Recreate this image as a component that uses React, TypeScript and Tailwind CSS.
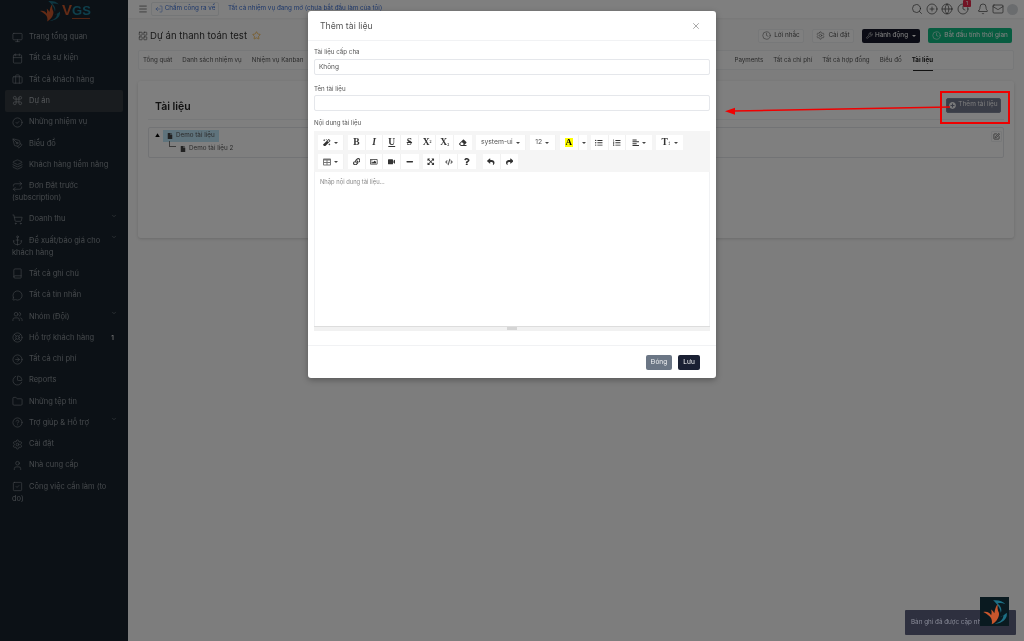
import React from "react";
import {
  Monitor, Calendar, Briefcase, Command, CircleCheck, PenTool, Layers, Repeat, ShoppingCart, Anchor, Book,
  MessageCircle, Users, LifeBuoy, CircleArrowRight, PieChart, Folder, CircleHelp, Settings, User, SquareCheck,
  ChevronDown, Menu, LogOut, LayoutGrid, Star, Search, CirclePlus, Globe, Clock, Bell, Mail, Wrench, X,
  SquarePen,
} from "lucide-react";
import {
  FaMagic, FaEraser, FaListUl, FaListOl, FaAlignLeft, FaTable, FaLink, FaRegImage, FaVideo, FaMinus,
  FaExpandArrowsAlt, FaCode, FaQuestion, FaReply, FaShare, FaFile, FaPlusCircle,
} from "react-icons/fa";

function Caret() {
  return <span className="ml-[3px] border-x-[2px] border-t-[2.5px] border-x-transparent border-t-[#444]" />;
}

function Logo({ size }: { size: number }) {
  return (
    <svg width={size} height={size} viewBox="0 0 40 40" fill="none">
      <path d="M2 20c6-1 10 1 12 5 1-3 1-6 0-9 3 2 4 4 5 6 1-6 2-11 6-15-2 6-1 10 1 14 1 5-2 13-11 18 1-5 0-9-3-12-3-3-6-5-10-7z" fill="#c8562c" />
      <path d="M17 2c8-1 15 1 19 6-5-2-9-2-12-1 5 4 7 9 5 14-1-7-6-14-12-19z" fill="#1d6f85" />
      <path d="M38 21c2 9-7 17-19 17 8-2 14-6 14-13-1 1-3 2-5 2 4-1 7-3 10-6z" fill="#1d6f85" />
    </svg>
  );
}

const nav: [any, string, string?, boolean?, string?][] = [
  [Monitor, "Trang tổng quan"],
  [Calendar, "Tất cả sự kiện"],
  [Briefcase, "Tất cả khách hàng"],
  [Command, "Dự án"],
  [CircleCheck, "Những nhiệm vụ"],
  [PenTool, "Biểu đồ"],
  [Layers, "Khách hàng tiềm năng"],
  [Repeat, "Đơn Đặt trước", "(subscription)"],
  [ShoppingCart, "Doanh thu", undefined, true],
  [Anchor, "Đề xuất/báo giá cho", "khách hàng", true],
  [Book, "Tất cả ghi chú"],
  [MessageCircle, "Tất cả tin nhắn"],
  [Users, "Nhóm (Đội)", undefined, true],
  [LifeBuoy, "Hỗ trợ khách hàng", undefined, false, "1"],
  [CircleArrowRight, "Tất cả chi phí"],
  [PieChart, "Reports"],
  [Folder, "Những tệp tin"],
  [CircleHelp, "Trợ giúp & Hỗ trợ", undefined, true],
  [Settings, "Cài đặt"],
  [User, "Nhà cung cấp"],
  [SquareCheck, "Công việc cần làm (to", "do)"],
];

function Sidebar() {
  return (
    <aside className="w-[128px] shrink-0 bg-[#19232c] text-[#8b9299] text-[7.5px] leading-[12px]">
      <div className="h-[26.5px] flex items-start pl-[39px] overflow-hidden">
        <Logo size={22} />
        <div className="ml-[1px] mt-[3px] flex flex-col">
          <span className="text-[15px] leading-[14px] font-bold text-[#c8562c] font-['Liberation_Sans',sans-serif]">V<span className="text-[#1d7f99] text-[13px]">GS</span></span>
          <span className="h-[1px] w-[18px] ml-[10px] bg-[#a54a28]" />
        </div>
      </div>
      <nav className="px-[5px] flex flex-col">
        {nav.map(([Icon, label, second, caret, badge]) => (
          <div key={label} className={`relative px-[7px] py-[4.65px] rounded-[2px] ${label === "Dự án" ? "bg-[#33393f] text-[#a8adb2]" : ""}`}>
            <div className="flex items-center h-[12px]">
              <Icon size={11} strokeWidth={1.3} className="w-[11px] mr-[6px] shrink-0" />
              <span className="whitespace-nowrap">{label}</span>
            </div>
            {second && <div>{second}</div>}
            {caret && <ChevronDown size={6} strokeWidth={2} className="absolute right-[6px] top-[4px]" />}
            {badge && <span className="absolute right-[9px] top-[5px] text-[6.5px] text-white">{badge}</span>}
          </div>
        ))}
      </nav>
    </aside>
  );
}

function TopBar() {
  return (
    <header className="h-[18px] bg-white flex items-center pl-[10px] pr-[6px] text-[6.3px] shrink-0 shadow-[0_1px_2px_rgba(0,0,0,0.05)]">
      <Menu size={10} strokeWidth={1.5} className="text-[#333] mr-[3px]" />
      <button className="h-[14px] w-[68px] flex items-center justify-center gap-[2px] border border-[#e9ecef] rounded-[2px] text-[#3b6fd4] mr-[9px]">
        <LogOut size={8} strokeWidth={1.5} className="rotate-180" />Chấm công ra về
      </button>
      <span className="text-[#3b6fd4] whitespace-nowrap">Tất cả nhiệm vụ đang mở (chưa bắt đầu làm của tôi)</span>
      <div className="ml-auto flex items-center text-[#333]">
        <Search size={12} strokeWidth={1.3} />
        <CirclePlus size={12} strokeWidth={1.3} className="ml-[3px]" />
        <Globe size={12} strokeWidth={1.3} className="ml-[3px]" />
        <div className="relative ml-[4px]">
          <Clock size={12} strokeWidth={1.3} />
          <span className="absolute -top-[3px] left-[6px] w-[8px] h-[7px] rounded-[1px] bg-[#e5294a] text-white text-[5px] leading-[7px] text-center">1</span>
        </div>
        <Bell size={12} strokeWidth={1.3} className="ml-[8px]" />
        <Mail size={12} strokeWidth={1.3} className="ml-[3px]" />
        <span className="ml-[3px] w-[11px] h-[11px] rounded-full bg-[#d5d8dc]" />
      </div>
    </header>
  );
}

const leftTabs = ["Tổng quát", "Danh sách nhiệm vụ", "Nhiệm vụ Kanban"];
const rightTabs = ["Payments", "Tất cả chi phí", "Tất cả hợp đồng", "Biểu đồ"];

function Page() {
  return (
    <main className="flex-1 min-w-0 bg-[#fafafa] flex flex-col">
      <TopBar />
      <div className="px-[10px]">
        <div className="h-[32px] pt-[3px] flex items-center pr-[2px]">
          <LayoutGrid size={10} strokeWidth={1.4} className="text-[#444] mr-[2px]" />
          <h1 className="text-[9.6px] text-[#333] mt-[1px]">Dự án thanh toán test</h1>
          <Star size={9} strokeWidth={1.5} className="text-[#f59e0b] ml-[5px]" />
          <div className="ml-auto flex items-center gap-[8px] text-[6.4px]">
            <button className="h-[14px] w-[46px] flex items-center justify-center gap-[3px] border border-[#eef0f2] bg-white rounded-[2px] text-[#555]"><Clock size={9} strokeWidth={1.4} />Lời nhắc</button>
            <button className="h-[14px] w-[42px] flex items-center justify-center gap-[3px] border border-[#eef0f2] bg-white rounded-[2px] text-[#555]"><Settings size={9} strokeWidth={1.4} />Cài đặt</button>
            <button className="h-[14px] w-[58px] flex items-center justify-center gap-[2px] bg-[#16192a] rounded-[2px] text-white"><Wrench size={7} strokeWidth={1.6} />Hành động<span className="ml-[2px] border-x-[2px] border-t-[2px] border-x-transparent border-t-white" /></button>
            <button className="h-[15px] w-[84px] flex items-center justify-center gap-[3px] bg-[#10b981] rounded-[2px] text-white"><Clock size={9} strokeWidth={1.4} />Bắt đầu tính thời gian</button>
          </div>
        </div>
        <div className="h-[20px] bg-white border border-[#eef0f2] rounded-[2px] flex items-center justify-between text-[6.2px] text-[#555] px-[4px]">
          <div className="flex gap-[10px]">{leftTabs.map((t) => <span key={t}>{t}</span>)}</div>
          <div className="flex gap-[10px] pr-[76px] items-center">
            {rightTabs.map((t) => <span key={t}>{t}</span>)}
            <span className="font-bold text-[#222] relative">Tài liệu<span className="absolute left-[1px] right-0 -bottom-[6px] h-[1px] bg-[#222]" /></span>
          </div>
        </div>
        <section className="mt-[11px] h-[157px] bg-white rounded-[3px] shadow-[0_1px_3px_rgba(0,0,0,0.15)] px-[10px] pt-[10px]">
          <div className="h-[29px] border-b border-[#eef0f2] flex items-center justify-between pl-[7px] pr-[3px]">
            <h2 className="text-[10.5px] font-semibold text-[#222] mt-[3px]">Tài liệu</h2>
            <button className="h-[15px] w-[55px] flex items-center justify-center gap-[2px] bg-[#757a8e] border border-[#83889a] rounded-[2px] text-[6.5px] text-white/90"><FaPlusCircle size={7} />Thêm tài liệu</button>
          </div>
          <div className="mt-[7px] h-[31px] border border-[#e5e7eb] rounded-[2px] relative text-[6.3px] text-[#555] pl-[6px] pt-[2px]">
            <div className="flex items-center h-[12px]">
              <span className="w-[8px] text-[5px] text-black">▲</span>
              <span className="bg-[#bfe6f8] flex items-center gap-[3px] px-[4px] h-[12px]"><FaFile size={6} className="text-[#444]" />Demo tài liệu</span>
            </div>
            <div className="flex items-center h-[12px] ml-[15px] relative">
              <span className="absolute -left-[1px] -top-[1px] w-[7px] h-[6px] border-l border-b border-[#777]" />
              <span className="flex items-center gap-[3px] ml-[10px] mt-[1px]"><FaFile size={6} className="text-[#444]" />Demo tài liệu 2</span>
            </div>
            <span className="absolute right-[1px] top-[3px] w-[11px] h-[11px] flex items-center justify-center border border-[#eef0f2] rounded-[1px]"><SquarePen size={7} className="text-[#333]" /></span>
          </div>
        </section>
      </div>
    </main>
  );
}

function TB({ children, w = "w-[17.7px]" }: { children: React.ReactNode; w?: string }) {
  return <span className={`${w} h-[15px] bg-white border-r border-[#f1f1f1] last:border-r-0 flex items-center justify-center text-[#333] shrink-0`}>{children}</span>;
}

function Toolbar() {
  const s = { size: 7.5 };
  const serif = "font-['Liberation_Serif',serif] text-[9.5px] font-bold";
  return (
    <div className="bg-[#f5f5f5] h-[41px] pl-[4px] pt-[4px] flex flex-col gap-[4px]">
      <div className="flex items-center">
        <TB w="w-[26px]"><FaMagic {...s} /><Caret /></TB>
        <div className="flex ml-[4px]">
          <TB><span className={serif}>B</span></TB>
          <TB><span className={`${serif} italic`}>I</span></TB>
          <TB><span className={`${serif} underline`}>U</span></TB>
          <TB><span className={`${serif} line-through`}>S</span></TB>
          <TB><span className={serif}>X<sup className="text-[4px]">2</sup></span></TB>
          <TB><span className={serif}>X<sub className="text-[4px]">2</sub></span></TB>
          <TB><FaEraser {...s} /></TB>
        </div>
        <TB w="w-[50px] ml-[4px]"><span className="text-[6.8px] text-[#555]">system-ui</span><Caret /></TB>
        <TB w="w-[26px] ml-[4px]"><span className="text-[6.8px] text-[#555]">12</span><Caret /></TB>
        <div className="flex ml-[4px]">
          <TB w="w-[19px]"><span className="bg-[#ffff00] font-bold text-[9px] leading-[9px] px-[1px] text-black font-['Liberation_Serif',serif]">A</span></TB>
          <TB w="w-[8px]"><Caret /></TB>
        </div>
        <div className="flex ml-[4px]">
          <TB><FaListUl {...s} /></TB>
          <TB><FaListOl {...s} /></TB>
          <TB w="w-[26px]"><FaAlignLeft {...s} /><Caret /></TB>
        </div>
        <TB w="w-[27px] ml-[4px]"><span className="font-['Liberation_Serif',serif] text-[9.5px] font-bold leading-none">T<span className="text-[6px] font-normal">↕</span></span><Caret /></TB>
      </div>
      <div className="flex items-center">
        <TB w="w-[26px]"><FaTable size={8} className="text-[#777]" /><Caret /></TB>
        <div className="flex ml-[4px]">
          <TB><FaLink {...s} /></TB>
          <TB><FaRegImage {...s} /></TB>
          <TB><FaVideo {...s} /></TB>
          <TB><FaMinus {...s} /></TB>
        </div>
        <div className="flex ml-[4px]">
          <TB><FaExpandArrowsAlt {...s} /></TB>
          <TB><FaCode size={8} className="text-[#555]" /></TB>
          <TB><FaQuestion {...s} /></TB>
        </div>
        <div className="flex ml-[7px]">
          <TB><FaReply {...s} /></TB>
          <TB><FaShare {...s} /></TB>
        </div>
      </div>
    </div>
  );
}

function Modal() {
  const label = "block text-[6.2px] leading-[10px] text-[#555]";
  const input = "h-[16px] border border-[#e5e7eb] rounded-[2px] px-[4px] pt-[1px] flex items-center text-[6.5px] text-[#555]";
  return (
    <div className="absolute inset-0 bg-black/50 pointer-events-none">
      <div className="mt-[11px] ml-[308px] w-[408px] h-[367px] bg-white rounded-[3px] flex flex-col shadow-[0_2px_6px_rgba(0,0,0,0.3)]">
        <div className="h-[30px] border-b border-[#f1f2f4] flex items-center justify-between pl-[12px] pr-[15px] shrink-0">
          <h3 className="text-[8.7px] text-[#555] mt-[2px]">Thêm tài liệu</h3>
          <X size={10} strokeWidth={1.2} className="text-[#555]" />
        </div>
        <div className="px-[6px] pt-[6px] flex-1">
          <label className={label}>Tài liệu cấp cha</label>
          <div className={`${input} mt-[2px]`}>Không</div>
          <label className={`${label} mt-[9px]`}>Tên tài liệu</label>
          <div className={`${input} mt-[1px]`} />
          <label className={`${label} mt-[7px]`}>Nội dung tài liệu</label>
          <div className="mt-[3px]">
            <Toolbar />
            <div className="h-[154px] border-x border-[#f1f2f4] text-[5.8px] text-[#888] px-[5px] pt-[6px]">Nhập nội dung tài liệu...</div>
            <div className="h-[5px] bg-[#f1f1f1] border-t border-[#ddd] flex justify-center"><span className="w-[10px] h-[3px] bg-[#d5d5d5]" /></div>
          </div>
        </div>
        <div className="h-[33px] border-t border-[#f1f2f4] flex items-center justify-end gap-[6px] pr-[16px] text-[6.5px] shrink-0">
          <button className="h-[15px] w-[26px] pt-[1px] bg-[#6b7685] rounded-[2px] text-white/90">Đóng</button>
          <button className="h-[15px] w-[22px] pt-[1px] bg-[#1a2033] rounded-[2px] text-white">Lưu</button>
        </div>
      </div>
    </div>
  );
}

export default function App() {
  return (
    <div className="relative w-[1024px] h-[641px] overflow-hidden flex font-['Inter',sans-serif] blur-[0.35px]">
      <Sidebar />
      <Page />
      <Modal />
      <div className="absolute left-[940px] top-[91px] w-[70px] h-[33px] border-2 border-[#ee0000]" />
      <svg className="absolute left-[720px] top-[100px]" width="232" height="20" viewBox="0 0 232 20" fill="none">
        <path d="M12 11L230 7" stroke="#f00000" strokeWidth="1.5" />
        <path d="M5 11.2l10-3.5v7z" fill="#f00000" />
      </svg>
      <div className="absolute left-[905px] top-[610px] w-[111px] h-[25px] bg-[#2e303f] text-[#8a8c99] text-[6.3px] rounded-[1px] flex items-center pl-[6px] whitespace-nowrap overflow-hidden">Bản ghi đã được cập nhật</div>
      <div className="absolute left-[980px] top-[597px] w-[29px] h-[29px] bg-[#0a1a20] flex items-center justify-center"><Logo size={26} /></div>
    </div>
  );
}
